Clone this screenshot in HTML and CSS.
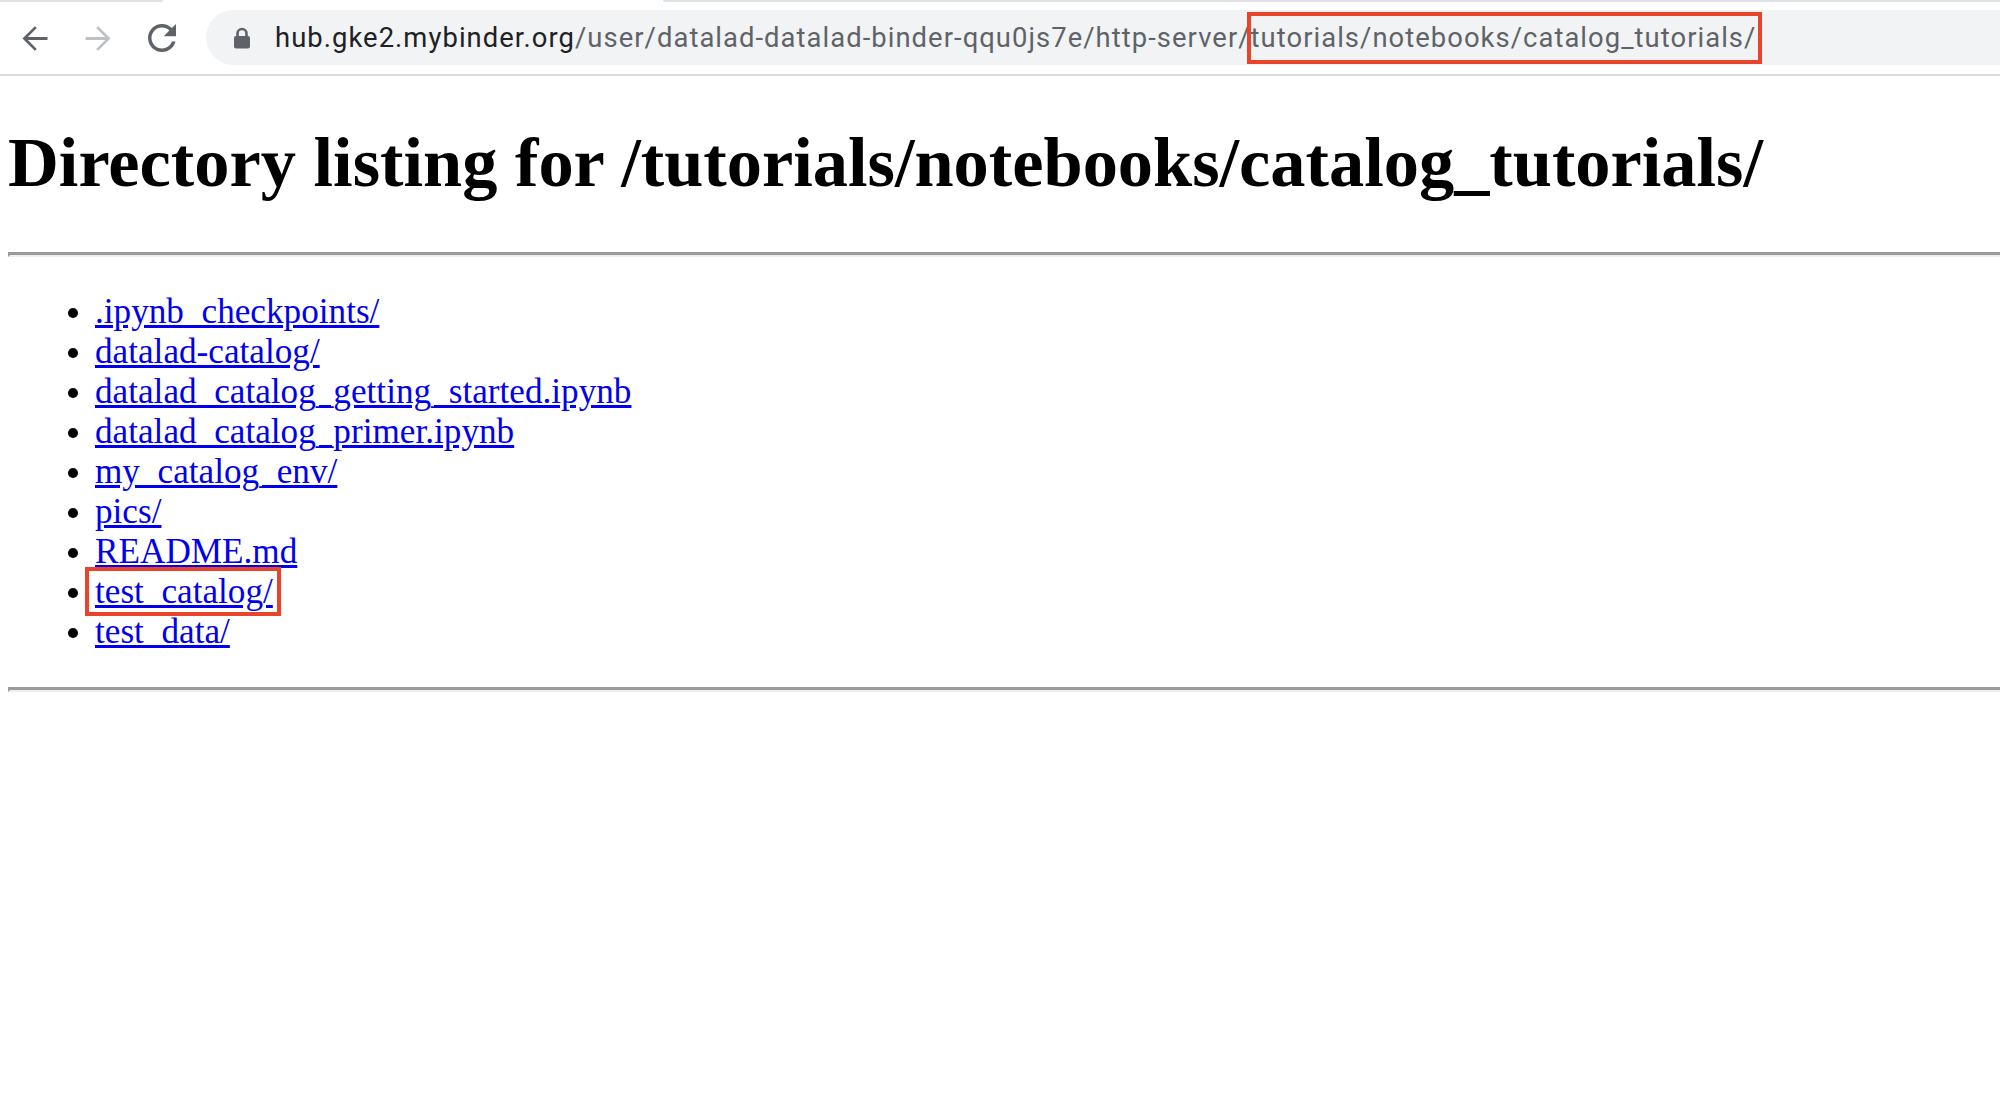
FILE: index.html
```html
<!DOCTYPE html>
<html>
<head>
<meta charset="utf-8">
<title>Directory listing for /tutorials/notebooks/catalog_tutorials/</title>
<link rel="stylesheet" href="styles.css">
</head>
<body>
<div class="chrome">
  <div class="tabstrip">
    <div class="tab-edge left"></div>
    <div class="tab-gap"></div>
    <div class="tab-edge right"></div>
  </div>
  <div class="toolbar">
    <div class="nav-btn">
      <svg width="39" height="39" viewBox="0 0 24 24"><path fill="#5f6368" d="M20 11.1H7.9l5.5-5.5L12.2 4.4 4.6 12l7.6 7.6 1.2-1.2-5.5-5.5H20z"/></svg>
    </div>
    <div class="nav-btn">
      <svg width="39" height="39" viewBox="0 0 24 24"><path fill="#bdc1c6" d="M4 11.1h12.1l-5.5-5.5 1.2-1.2 7.6 7.6-7.6 7.6-1.2-1.2 5.5-5.5H4z"/></svg>
    </div>
    <div class="nav-btn">
      <svg width="42" height="42" viewBox="0 0 24 24"><path fill="#5f6368" d="M17.65 6.35C16.2 4.9 14.21 4 12 4c-4.42 0-7.99 3.58-7.99 8s3.57 8 7.99 8c3.73 0 6.84-2.55 7.73-6h-2.08c-.82 2.33-3.04 4-5.65 4-3.31 0-6-2.690-6-6s2.69-6 6-6c1.66 0 3.14.69 4.22 1.78L13 11h7V4l-2.35 2.35z"/></svg>
    </div>
    <div class="omnibox">
      <svg class="lock" width="18" height="22" viewBox="0 0 18 22"><path d="M4.5 10V6.5a4.5 4.5 0 0 1 9 0V10" fill="none" stroke="#5f6368" stroke-width="2.6"/><rect x="1" y="9" width="16" height="12.5" rx="2" fill="#5f6368"/></svg>
      <div class="url"><span class="host">hub.gke2.mybinder.org</span><span class="path">/user/datalad-datalad-binder-qqu0js7e/http-server/<span class="mark-url">tutorials/notebooks/catalog_tutorials/</span></span></div>
    </div>
  </div>
</div>
<div class="page">
  <h1 class="title">Directory listing for /tutorials/notebooks/catalog_tutorials/</h1>
  <hr class="rule">
  <ul class="listing">
    <li><a href="#">.ipynb_checkpoints/</a></li>
    <li><a href="#">datalad-catalog/</a></li>
    <li><a href="#">datalad_catalog_getting_started.ipynb</a></li>
    <li><a href="#">datalad_catalog_primer.ipynb</a></li>
    <li><a href="#">my_catalog_env/</a></li>
    <li><a href="#">pics/</a></li>
    <li><a href="#">README.md</a></li>
    <li><span class="mark-item"><a href="#">test_catalog/</a></span></li>
    <li><a href="#">test_data/</a></li>
  </ul>
  <hr class="rule">
</div>
</body>
</html>
```
FILE: styles.css
```css
html, body {
  margin: 0;
  padding: 0;
  background: #ffffff;
}
body {
  font-family: "Liberation Serif", "Times New Roman", serif;
  color: #000;
}
.chrome {
  background: #ffffff;
}
.tabstrip {
  display: flex;
  height: 2px;
}
.tab-edge {
  background: #dee1e6;
  height: 2px;
}
.tab-edge.left {
  width: 163px;
  border-bottom-right-radius: 2px;
}
.tab-gap {
  width: 500px;
}
.tab-edge.right {
  flex: 1;
  border-bottom-left-radius: 2px;
}
.toolbar {
  display: flex;
  align-items: center;
  height: 72px;
  padding-left: 2px;
  border-bottom: 2px solid #dadce0;
}
.nav-btn {
  width: 64px;
  height: 64px;
  display: flex;
  align-items: center;
  justify-content: center;
}
.omnibox {
  margin-left: 12px;
  flex: 1;
  height: 55px;
  background: #f1f3f4;
  border-radius: 28px 0 0 28px;
  display: flex;
  align-items: center;
  padding-left: 27px;
  margin-top: -1px;
}
.lock {
  display: block;
}
.url {
  margin-left: 24px;
  font-family: Roboto, "Liberation Sans", sans-serif;
  font-size: 27.4px;
  letter-spacing: 1.05px;
  white-space: nowrap;
}
.host {
  color: #202124;
}
.path {
  color: #5f6368;
}
.mark-url {
  position: relative;
}
.mark-url::after {
  content: "";
  position: absolute;
  left: -4px;
  right: -6px;
  top: -10px;
  bottom: -10px;
  border: 4px solid #e8442b;
}
.page {
  padding-left: 8px;
}
.title {
  font-size: 70.4px;
  line-height: 80px;
  font-weight: bold;
  margin: 46px 0 50px 0;
  white-space: nowrap;
}
.rule {
  margin: 0;
  height: 0;
  border: 0;
  border-top: 3px solid #9a9a9a;
  border-bottom: 2px solid #eeeeee;
  border-left: 2px solid #9a9a9a;
}
.listing {
  margin: 35px 0 35px 0;
  padding-left: 87px;
  font-size: 35.2px;
  line-height: 40px;
}
.listing a {
  color: #0000ee;
}
.mark-item {
  position: relative;
}
.mark-item::after {
  content: "";
  position: absolute;
  left: -10px;
  right: -8px;
  top: -5px;
  bottom: -5px;
  border: 4px solid #e8442b;
}
```
